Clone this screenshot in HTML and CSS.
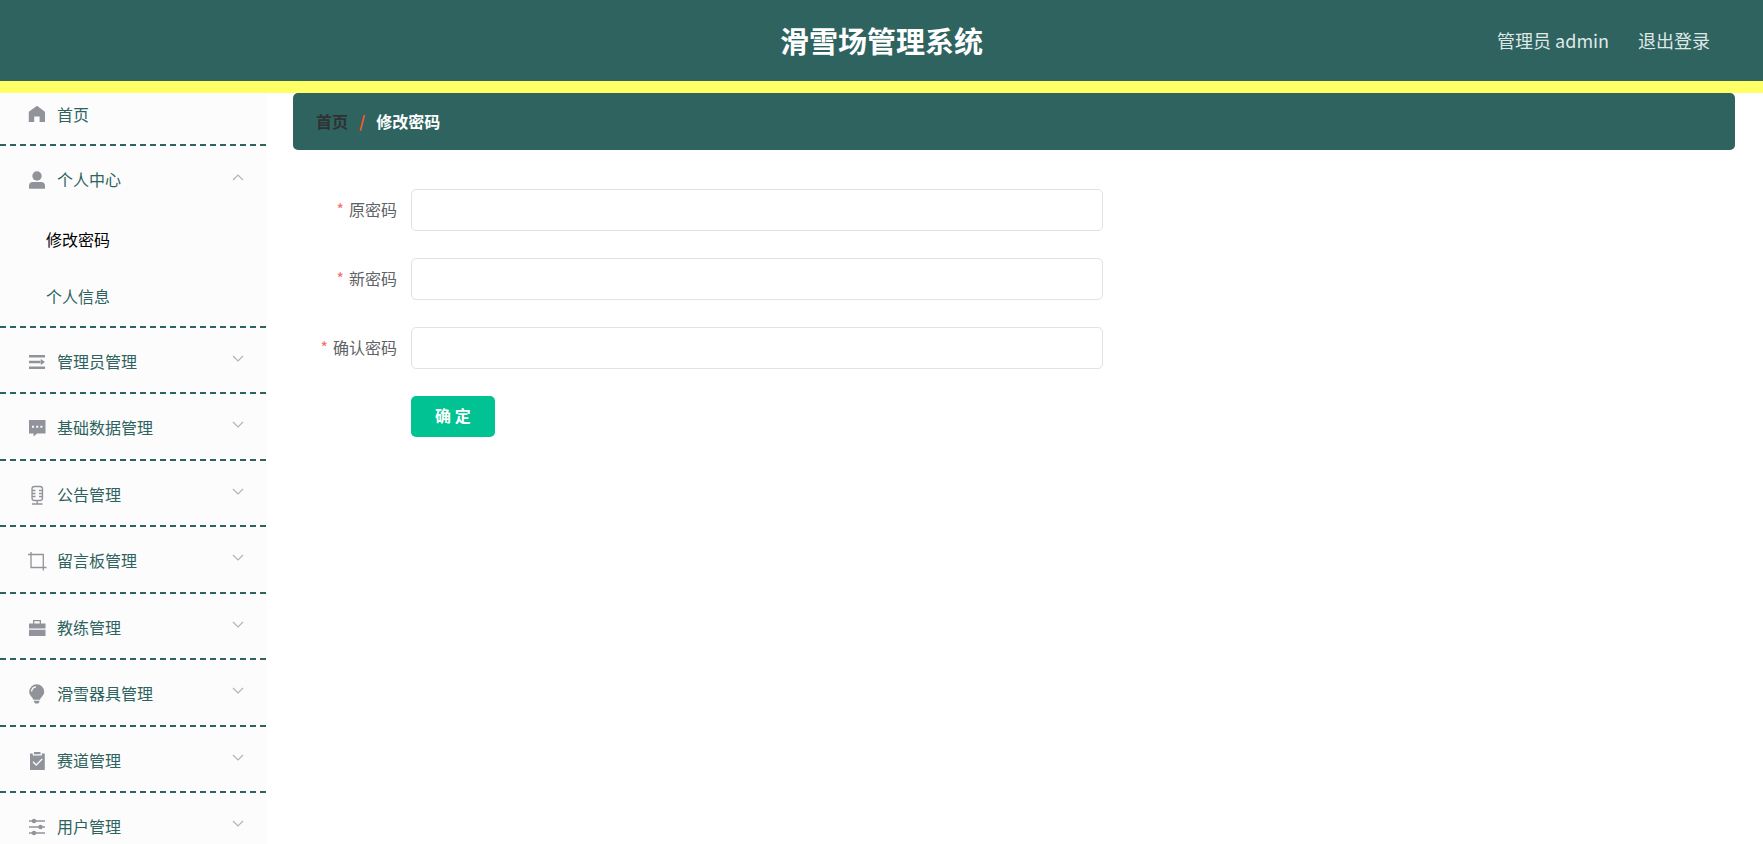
FILE: index.html
```
<!DOCTYPE html>
<html lang="zh-CN">
<head>
    <meta charset="UTF-8">
    <meta name="viewport" content="width=device-width, initial-scale=1.0">
    <title>滑雪场管理系统</title>
    <link rel="stylesheet" href="styles.css">
</head>
<body>
    <header class="navbar">
        <h1 class="title">滑雪场管理系统</h1>
        <div class="right-menu">
            <span class="user-info">管理员 admin</span>
            <a class="logout" href="#">退出登录</a>
        </div>
    </header>

    <div class="container">
        <nav class="sidebar">
            <ul class="menu">
                <li class="menu-item home">
                    <a class="menu-title" href="#">
                        <svg class="icon" viewBox="0 0 18 18"><path d="M9 .8 1.200 6.600q-.4.3-.4.8v9.600h5.400V11.500h5.400v5.500h5.400V7.400q0-.5-.4-.8z"/></svg>
                        <span>首页</span>
                    </a>
                </li>
                <li class="menu-item open">
                    <button type="button" class="menu-title">
                        <svg class="icon" viewBox="0 0 18 18"><circle cx="9" cy="5" r="4.700"/><path d="M1 17.200v-2.200q0-4 4-4h8q4 0 4 4v2.200q0 .6-.6.6H1.600q-.6 0-.6-.6z"/></svg>
                        <span>个人中心</span>
                        <svg class="arrow" viewBox="0 0 12 12"><path d="M1 9l5-5 5 5"/></svg>
                    </button>
                    <ul class="submenu">
                        <li><a class="active" href="#">修改密码</a></li>
                        <li><a href="#">个人信息</a></li>
                    </ul>
                </li>
                <li class="menu-item">
                    <button type="button" class="menu-title">
                        <svg class="icon" viewBox="0 0 18 18"><path d="M1 2h16v2.400H1zM1 7.800h11.500V10.200H1zM1 13.600h16v2.400H1zM12.800 6l4.200 3-4.200 3z"/></svg>
                        <span>管理员管理</span>
                        <svg class="arrow" viewBox="0 0 12 12"><path d="M1 3l5 5 5-5"/></svg>
                    </button>
                </li>
                <li class="menu-item">
                    <button type="button" class="menu-title">
                        <svg class="icon" viewBox="0 0 18 18"><path fill-rule="evenodd" d="M1 1h16.500v13.500H9L5.500 17.500v-3H1zM4 6.700v2h2v-2zM8.200 6.700v2h2v-2zM12.400 6.700v2h2v-2z"/></svg>
                        <span>基础数据管理</span>
                        <svg class="arrow" viewBox="0 0 12 12"><path d="M1 3l5 5 5-5"/></svg>
                    </button>
                </li>
                <li class="menu-item">
                    <button type="button" class="menu-title">
                        <svg class="icon line" viewBox="0 0 18 18"><rect x="4" y=".5" width="10.500" height="14" rx="2.500"/><path d="M4 4.500h3.500M4 7.500h3.500M4 10.500h3.500M14.500 4.500H11M14.500 7.500H11M14.500 10.500H11M9.200 14.500v3.500M4 18h10.500"/></svg>
                        <span>公告管理</span>
                        <svg class="arrow" viewBox="0 0 12 12"><path d="M1 3l5 5 5-5"/></svg>
                    </button>
                </li>
                <li class="menu-item">
                    <button type="button" class="menu-title">
                        <svg class="icon line" viewBox="0 0 18 18"><path d="M0 2.500h15.300V18.500M3 0v15.500h15.500"/></svg>
                        <span>留言板管理</span>
                        <svg class="arrow" viewBox="0 0 12 12"><path d="M1 3l5 5 5-5"/></svg>
                    </button>
                </li>
                <li class="menu-item">
                    <button type="button" class="menu-title">
                        <svg class="icon" viewBox="0 0 18 18"><path fill-rule="evenodd" d="M5 4.500V1h8v3.500h4.500v5H1v-5zM6.300 4.500h5.400V2.300H6.300zM1 10.700h16.500V17H1z"/></svg>
                        <span>教练管理</span>
                        <svg class="arrow" viewBox="0 0 12 12"><path d="M1 3l5 5 5-5"/></svg>
                    </button>
                </li>
                <li class="menu-item">
                    <button type="button" class="menu-title">
                        <svg class="icon" viewBox="0 0 18 18"><path d="M8.700-.7a7.500 7.500 0 0 1 7.500 7.500c0 3.700-3.200 5-4.200 8H5.400c-1-3-4.200-4.300-4.200-8A7.500 7.500 0 0 1 8.700-.7zM6 15.800h5.400v1.200l-1.200 1.500H7.200L6 17z"/><path class="cut" d="M3.600 6.500A5 5 0 0 1 8 1.800"/></svg>
                        <span>滑雪器具管理</span>
                        <svg class="arrow" viewBox="0 0 12 12"><path d="M1 3l5 5 5-5"/></svg>
                    </button>
                </li>
                <li class="menu-item">
                    <button type="button" class="menu-title">
                        <svg class="icon" viewBox="0 0 18 18"><path d="M6 0h6.500v2.200H6zM2 1.500h2.800v2h9v-2h3V18H2z"/><path class="cut" d="M5 9.800l3.200 3.200 6-6"/></svg>
                        <span>赛道管理</span>
                        <svg class="arrow" viewBox="0 0 12 12"><path d="M1 3l5 5 5-5"/></svg>
                    </button>
                </li>
                <li class="menu-item">
                    <button type="button" class="menu-title">
                        <svg class="icon" viewBox="0 0 18 18"><path d="M1 2.200h16v1.600H1zM1 8.200h16v1.600H1zM1 14.200h16v1.600H1z"/><circle cx="6" cy="3" r="2.200"/><circle cx="12.500" cy="9" r="2.200"/><circle cx="6" cy="15" r="2.200"/></svg>
                        <span>用户管理</span>
                        <svg class="arrow" viewBox="0 0 12 12"><path d="M1 3l5 5 5-5"/></svg>
                    </button>
                </li>
            </ul>
        </nav>

        <main class="main">
            <nav class="breadcrumb">
                <a href="#">首页</a>
                <span class="separator">/</span>
                <span class="current">修改密码</span>
            </nav>

            <form class="password-form">
                <div class="form-item">
                    <label for="oldPassword">原密码</label>
                    <input type="password" id="oldPassword" name="oldPassword" required>
                </div>
                <div class="form-item">
                    <label for="newPassword">新密码</label>
                    <input type="password" id="newPassword" name="newPassword" required>
                </div>
                <div class="form-item">
                    <label for="rePassword">确认密码</label>
                    <input type="password" id="rePassword" name="rePassword" required>
                </div>
                <div class="form-buttons">
                    <button type="submit">确 定</button>
                </div>
            </form>
        </main>
    </div>
</body>
</html>
```
FILE: styles.css
```
* {
    box-sizing: border-box;
}
body {
    margin: 0;
    height: 100vh;
    display: flex;
    flex-direction: column;
    overflow: hidden;
    font-family: "Noto Sans CJK SC", sans-serif;
    font-size: 16px;
    line-height: 24px;
    background-color: #fff;
}
a {
    text-decoration: none;
}
ul {
    list-style: none;
    margin: 0;
    padding: 0;
}
button, input {
    font: inherit;
}

/* 顶部 */
.navbar {
    display: grid;
    grid-template-columns: 1fr auto 1fr;
    align-items: center;
    flex-shrink: 0;
    height: 93px;
    padding: 0 53px 2px;
    background-color: #2e6360;
    border-bottom: 12px solid #ffff66;
}
.title {
    grid-column: 2;
    margin: 0;
    font-size: 29px;
    line-height: 40px;
    color: #fff;
}
.right-menu {
    display: flex;
    justify-content: flex-end;
    gap: 29px;
    font-size: 18px;
}
.user-info, .logout {
    color: #dfe8e6;
}

.container {
    display: flex;
    flex: 1;
    min-height: 0;
}

/* 左侧菜单 */
.sidebar {
    width: 266px;
    flex-shrink: 0;
    overflow: hidden;
    background-color: #fcfcfc;
}
.menu {
    display: grid;
    grid-template-rows: 53px 182px;
    grid-auto-rows: 66px 67px;
}
.menu-item {
    border-bottom: 2px dashed #2e6360;
}
.menu-title {
    display: flex;
    align-items: center;
    width: 100%;
    height: 66px;
    padding: 1px 22px 0 28px;
    border: none;
    background: none;
    color: #2e6360;
    text-align: left;
    cursor: pointer;
}
.home .menu-title {
    height: 42px;
    padding-top: 0;
}
.menu-title span {
    padding-bottom: 1px;
}
.icon {
    width: 18px;
    height: 18px;
    margin-right: 11px;
    fill: #909399;
    overflow: visible;
}
.icon.line {
    fill: none;
    stroke: #909399;
    stroke-width: 1.3;
}
.icon .cut {
    fill: none;
    stroke: #fcfcfc;
    stroke-width: 1.3;
}
.arrow {
    width: 12px;
    height: 12px;
    margin: 0 0 5px auto;
    fill: none;
    stroke: #b0b3b8;
    stroke-width: 1.2;
}
.submenu a {
    display: block;
    padding: 15px 46px 18px;
    color: #2e6360;
}
.submenu .active {
    color: #000;
}

/* 内容区 */
.main {
    flex: 1;
    padding: 0 28px 0 27px;
}
.breadcrumb {
    display: flex;
    align-items: center;
    gap: 11px;
    height: 57px;
    padding: 0 23px 2px;
    border-radius: 5px;
    background-color: #2e6360;
    font-weight: bold;
}
.breadcrumb a {
    color: #303133;
}
.breadcrumb .separator {
    color: #ff5722;
}
.breadcrumb .current {
    color: #fff;
}
.password-form {
    margin-top: 39px;
}
.form-item {
    display: flex;
    align-items: center;
    margin-bottom: 27px;
}
.form-item label {
    width: 118px;
    padding: 0 14px 3px 0;
    text-align: right;
    color: #606266;
}
.form-item label::before {
    content: "*";
    margin-right: 5px;
    color: #f56c6c;
}
.form-item input {
    width: 48%;
    height: 42px;
    padding: 0 16px;
    border: 1px solid #dfe2e6;
    border-radius: 5px;
    background-color: #fff;
    outline: none;
}
.form-buttons {
    padding-left: 118px;
}
.form-buttons button {
    height: 41px;
    padding: 0 24px 3px;
    border: none;
    border-radius: 5px;
    background-color: #00c292;
    color: #fff;
    font-weight: bold;
    cursor: pointer;
}
```
